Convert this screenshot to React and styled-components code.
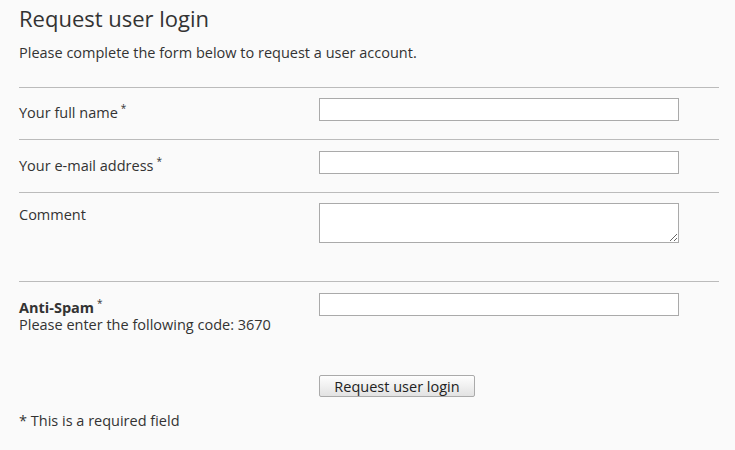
import React from "react";
import styled, { createGlobalStyle } from "styled-components";

const GlobalStyle = createGlobalStyle`
  html, body {
    margin: 0;
    padding: 0;
    background: #fafafa;
  }
  body {
    font-family: "Open Sans", "DejaVu Sans", sans-serif;
    font-size: 14.5px;
    color: #333;
  }
`;

const Page = styled.div`
  padding: 3px 16px 0 19px;
  width: 700px;
`;

const Title = styled.h1`
  margin: 0;
  font-size: 22px;
  line-height: 30px;
  font-weight: 400;
  color: #333;
`;

const Intro = styled.p`
  margin: 10px 0 24px;
  line-height: 20px;
`;

const Row = styled.div`
  display: grid;
  grid-template-columns: 300px 360px;
  align-items: start;
  border-top: 1px solid #bbb;
  padding: ${(p) => p.$pt}px 0 ${(p) => p.$pb}px;
`;

const Label = styled.label`
  display: block;
  padding-top: ${(p) => p.$top}px;
  line-height: ${(p) => p.$lh || 20}px;
`;

const Strong = styled.strong`
  font-weight: 700;
`;

const Req = styled.sup`
  font-size: 10px;
  margin-left: 3px;
  vertical-align: 6px;
  line-height: 0;
`;

const Input = styled.input`
  box-sizing: border-box;
  display: block;
  width: 360px;
  height: 23px;
  margin: 0;
  border: 1px solid #aaa;
  background: #fff;
  font: inherit;
  padding: 0 4px;
`;

const TextArea = styled.textarea`
  box-sizing: border-box;
  display: block;
  width: 360px;
  height: 40px;
  margin: 0;
  border: 1px solid #aaa;
  background: #fff;
  font: inherit;
  padding: 2px 4px;
`;

const Actions = styled.div`
  padding: 42px 0 0 300px;
`;

const Button = styled.button`
  box-sizing: border-box;
  display: block;
  width: 156px;
  height: 22px;
  margin: 0;
  padding: 0;
  border: 1px solid #aaa;
  border-radius: 2px;
  background: linear-gradient(#fefefe, #e2e2e2);
  font-family: inherit;
  font-size: 14.5px;
  color: #222;
  cursor: pointer;
`;

const Note = styled.p`
  margin: 14px 0 0;
  line-height: 20px;
`;

export default function App() {
  return (
    <>
      <GlobalStyle />
      <Page>
        <Title>Request user login</Title>
        <Intro>Please complete the form below to request a user account.</Intro>
        <form onSubmit={(e) => e.preventDefault()}>
          <Row $pt={10} $pb={16}>
            <Label $top={5}>
              Your full name<Req>*</Req>
            </Label>
            <Input type="text" />
          </Row>
          <Row $pt={11} $pb={16}>
            <Label $top={5}>
              Your e-mail address<Req>*</Req>
            </Label>
            <Input type="email" />
          </Row>
          <Row $pt={10} $pb={38}>
            <Label $top={2}>Comment</Label>
            <TextArea />
          </Row>
          <Row $pt={11} $pb={0}>
            <Label $top={6} $lh={17}>
              <Strong>Anti-Spam</Strong>
              <Req>*</Req>
              <br />
              Please enter the following code: 3670
            </Label>
            <Input type="text" />
          </Row>
          <Actions>
            <Button type="submit">Request user login</Button>
          </Actions>
        </form>
        <Note>* This is a required field</Note>
      </Page>
    </>
  );
}
